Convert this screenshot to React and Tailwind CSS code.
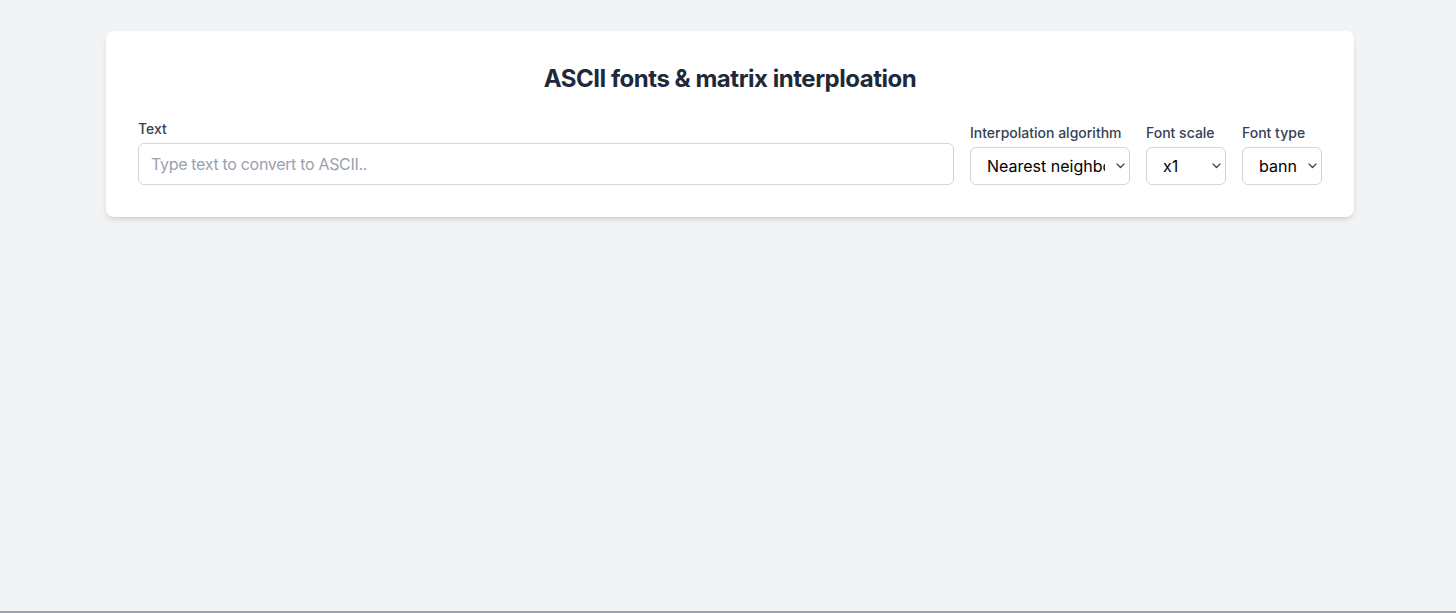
import React, { useState } from "react";

// Chevron for the custom selects
function Chevron() {
  return (
    <svg
      className="pointer-events-none absolute right-[5px] top-1/2 -translate-y-1/2 text-gray-700"
      width="9"
      height="6"
      viewBox="0 0 9 6"
      fill="none"
    >
      <path d="M1 1l3.5 3.5L8 1" stroke="currentColor" strokeWidth="1.2" strokeLinecap="round" strokeLinejoin="round" />
    </svg>
  );
}

function SelectField({ label, width, value, options, onChange }) {
  return (
    <div className={`flex flex-col ${width}`}>
      <label className="mb-1 text-sm font-medium text-gray-700">{label}</label>
      <div className="relative">
        <select
          value={value}
          onChange={(e) => onChange(e.target.value)}
          className="h-[38px] w-full appearance-none rounded-md border border-gray-300 bg-white pl-4 pr-6 text-base text-black outline-none"
        >
          {options.map((o) => (
            <option key={o} value={o}>
              {o}
            </option>
          ))}
        </select>
        <Chevron />
      </div>
    </div>
  );
}

export default function App() {
  const [text, setText] = useState("");
  const [algo, setAlgo] = useState("Nearest neighbour");
  const [scale, setScale] = useState("x1");
  const [font, setFont] = useState("banner");

  return (
    <div className="min-h-[613px] bg-[#f2f3f5] pt-[31px] font-['Inter',sans-serif]">
      <div className="ml-[106px] w-[1248px] rounded-lg bg-white p-8 shadow-md">
        {/* Title */}
        <h1 className="mb-6 text-center text-2xl font-bold tracking-[-0.02em] text-gray-800">
          ASCII fonts &amp; matrix interploation
        </h1>

        {/* Controls */}
        <div className="flex items-end gap-4">
          <div className="flex flex-1 flex-col">
            <label className="mb-1 text-sm font-medium text-gray-700">Text</label>
            <input
              type="text"
              value={text}
              onChange={(e) => setText(e.target.value)}
              placeholder="Type text to convert to ASCII.."
              className="h-[42px] w-full rounded-md border border-gray-300 px-3 text-base tracking-[-0.02em] text-gray-800 outline-none placeholder:text-gray-400"
            />
          </div>
          <SelectField
            label="Interpolation algorithm"
            width="w-[160px]"
            value={algo}
            onChange={setAlgo}
            options={["Nearest neighbour", "Bilinear", "Bicubic"]}
          />
          <SelectField
            label="Font scale"
            width="w-[80px]"
            value={scale}
            onChange={setScale}
            options={["x1", "x2", "x3", "x4"]}
          />
          <SelectField
            label="Font type"
            width="w-[80px]"
            value={font}
            onChange={setFont}
            options={["banner", "block", "standard"]}
          />
        </div>
      </div>
      <div className="fixed bottom-0 left-0 h-[2px] w-full bg-gray-400" />
    </div>
  );
}
